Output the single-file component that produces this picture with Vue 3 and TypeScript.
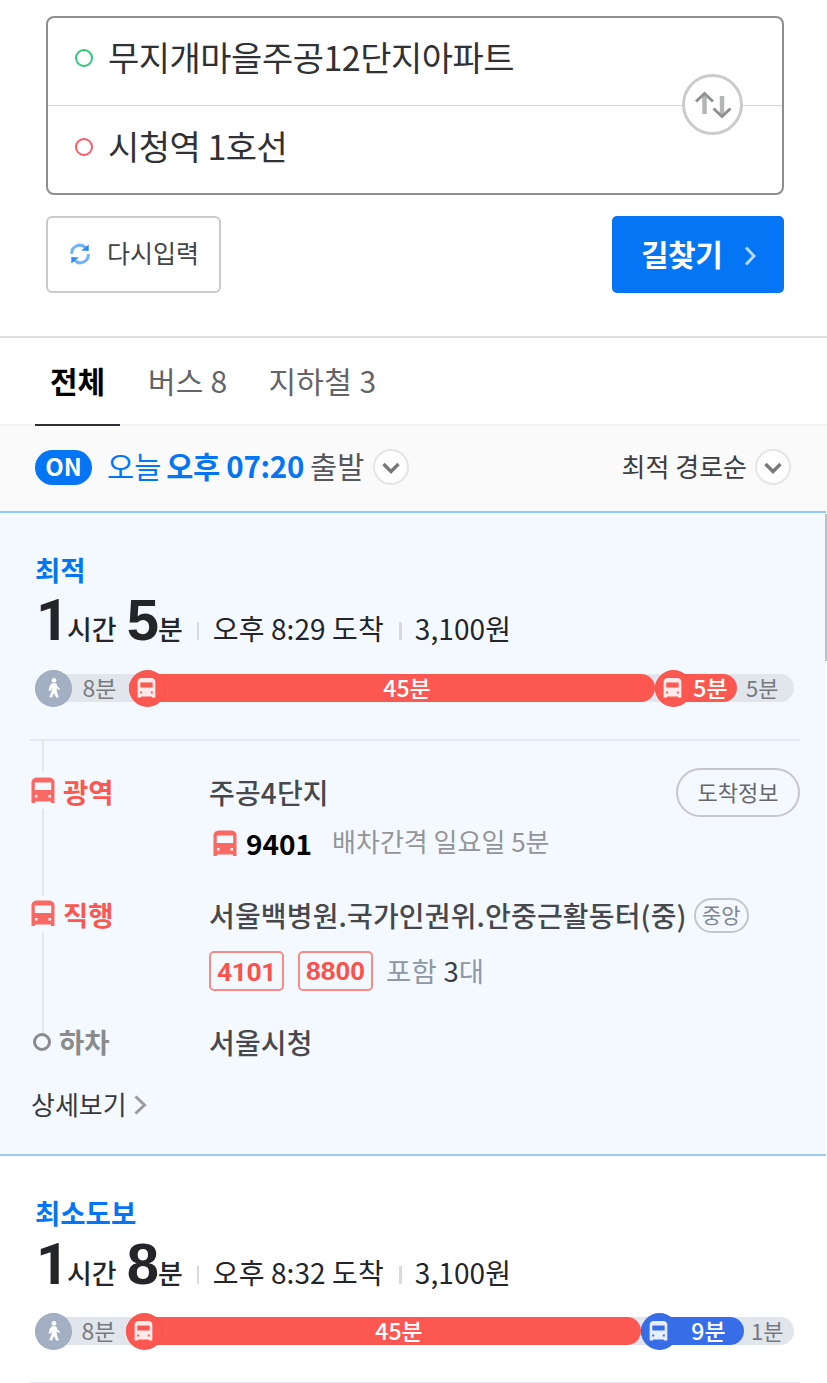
<script setup lang="ts">
interface Segment {
  kind: 'walk' | 'ride'
  color: string
  width: number
  label: string
  labelPad: number
}
interface Route {
  title: string
  minutes: string
  arrival: string
  fare: string
  segments: Segment[]
}

const RED = '#fc5751'
const BLUE = '#386de8'
const GREY = '#e1e6ed'

const routes: Route[] = [
  {
    title: '최적',
    minutes: '5',
    arrival: '오후 8:29 도착',
    fare: '3,100원',
    segments: [
      { kind: 'walk', color: GREY, width: 94, label: '8분', labelPad: 35 },
      { kind: 'ride', color: RED, width: 526, label: '45분', labelPad: 30 },
      { kind: 'ride', color: RED, width: 82, label: '5분', labelPad: 29 },
    ],
  },
  {
    title: '최소도보',
    minutes: '8',
    arrival: '오후 8:32 도착',
    fare: '3,100원',
    segments: [
      { kind: 'walk', color: GREY, width: 91, label: '8분', labelPad: 36 },
      { kind: 'ride', color: RED, width: 515, label: '45분', labelPad: 31 },
      { kind: 'ride', color: BLUE, width: 103, label: '9분', labelPad: 32 },
    ],
  },
]
const lastWalk = ['5분', '1분']
</script>

<template>
  <main class="page">
    <section class="search">
      <div class="fields">
        <div class="field"><i class="dot green"></i><span>무지개마을주공12단지아파트</span></div>
        <div class="field second"><i class="dot red"></i><span>시청역 1호선</span></div>
        <button class="swap">
          <svg width="60" height="60" viewBox="0 0 60 60" fill="none" stroke="#a9aaac" stroke-width="4">
            <path d="M21.500 39V19" stroke="#b4b5b6" stroke-width="4.500" /><path d="M13 26.500l8.500-8 8.500 8" stroke="#8f9092" stroke-width="3" />
            <path d="M39 21v20" stroke="#b4b5b6" stroke-width="4.500" /><path d="M30.500 33.500l8.500 8 8.500-8" stroke="#8f9092" stroke-width="3" />
          </svg>
        </button>
      </div>
      <div class="actions">
        <button class="reset">
          <svg width="20" height="22" viewBox="0 0 20 22" fill="none" stroke="#6fb1fb" stroke-width="3">
            <path d="M1.800 11A8 8 0 0 1 15.500 4.700M18.200 11A8 8 0 0 1 4.500 17.300" />
            <path d="M18.700 1.500v6.500l-7.500-.5zM1.300 20.500V14l7.500.5z" fill="#2f8bf6" stroke="none" />
          </svg>
          <span>다시입력</span>
        </button>
        <button class="find">
          <span>길찾기</span>
          <svg width="12" height="20" viewBox="0 0 12 20" fill="none" stroke="#b4d6ff" stroke-width="3"><path d="M2 1.500l8 8.500-8 8.500" /></svg>
        </button>
      </div>
    </section>

    <nav class="tabs">
      <a class="tab active">전체</a>
      <a class="tab bus-tab">버스 8</a>
      <a class="tab subway-tab">지하철 3</a>
    </nav>

    <section class="filter">
      <span class="on">ON</span>
      <span class="today">오늘</span>
      <span class="time">오후 07:20</span>
      <span class="depart">출발</span>
      <span class="round"><svg width="18" height="12" viewBox="0 0 18 12" fill="none" stroke="#77787a" stroke-width="3.400"><path d="M1.500 2L9 9.500 16.500 2" /></svg></span>
      <span class="sort">최적 경로순</span>
      <span class="round"><svg width="18" height="12" viewBox="0 0 18 12" fill="none" stroke="#77787a" stroke-width="3.400"><path d="M1.500 2L9 9.500 16.500 2" /></svg></span>
    </section>

    <article v-for="(route, i) in routes" :key="route.title" class="card" :class="{ selected: i === 0, plain: i === 1 }">
      <h2 class="title">{{ route.title }}</h2>
      <div class="summary">
        <b class="num one">1</b><span class="unit">시간</span>
        <b class="num">{{ route.minutes }}</b><span class="unit min">분</span>
        <i class="bar-sep"></i><span class="info">{{ route.arrival }}</span>
        <i class="bar-sep second-sep"></i><span class="info">{{ route.fare }}</span>
      </div>
      <div class="track">
        <div v-for="(seg, k) in route.segments" :key="k" class="seg" :class="seg.kind" :style="{ width: seg.width + 'px', '--c': seg.color, '--pad': seg.labelPad + 'px' }">
          <span class="badge">
            <svg v-if="seg.kind === 'walk'" width="14" height="22" viewBox="0 0 16 24" fill="#fff">
              <circle cx="8" cy="3.200" r="2.700" />
              <path d="M5.500 6.500h5l1.500 4 2.800 2-1 1.700-3-1.500.7 4.300 2 5.200-2.800 1-2.700-5.500-2.500 5.500-2.800-1.100 2.500-5.900.1-4.500-1.400 3.500-2.200-.4 1.600-5.600z" />
            </svg>
            <svg v-else width="19" height="20" viewBox="0 0 24 26" fill="#fff" opacity=".88">
              <path fill-rule="evenodd" d="M5 0h14q4.500 1 4.500 5v20.500H19V24H5v1.500H.5V5Q.5 1 5 0zM4 6v6.500h16V6zM3.800 17.500v2.500h2.500v-2.500zM17.700 17.500v2.500h2.500v-2.500z" />
            </svg>
          </span>
          <span class="seg-label">{{ seg.label }}</span>
        </div>
        <span class="last">{{ lastWalk[i] }}</span>
      </div>

      <div class="steps">
        <template v-if="i === 0">
          <div class="rail"><i class="l1"></i><i class="l2"></i><i class="l3"></i></div>
          <div class="step s1">
            <svg class="bus" width="24" height="27" viewBox="0 0 24 26" fill="#fa6863"><path fill-rule="evenodd" d="M5 0h14q4.500 1 4.500 4.500v21H20V24H4v1.500H.5v-21Q.5 1 5 0zM3.800 5v7.500h16.400V5zM4 17.500v2.500h2.500v-2.500zM17.500 17.500v2.500H20v-2.500z" /></svg>
            <b class="type">광역</b><span class="stop">주공4단지</span>
            <button class="arrive">도착정보</button>
          </div>
          <div class="line-info l9401">
            <svg width="24" height="27" viewBox="0 0 24 26" fill="#fa6863"><path fill-rule="evenodd" d="M5 0h14q4.500 1 4.500 4.500v21H20V24H4v1.500H.5v-21Q.5 1 5 0zM3.800 5v7.500h16.400V5zM4 17.500v2.500h2.500v-2.500zM17.500 17.500v2.500H20v-2.500z" /></svg>
            <b class="bus-no">9401</b><span class="interval">배차간격 일요일 5분</span>
          </div>
          <div class="step s2">
            <svg class="bus" width="24" height="27" viewBox="0 0 24 26" fill="#fa6863"><path fill-rule="evenodd" d="M5 0h14q4.500 1 4.500 4.500v21H20V24H4v1.500H.5v-21Q.5 1 5 0zM3.800 5v7.500h16.400V5zM4 17.500v2.500h2.500v-2.500zM17.500 17.500v2.500H20v-2.500z" /></svg>
            <b class="type">직행</b><span class="stop">서울백병원.국가인권위.안중근활동터(중)</span>
            <span class="central">중앙</span>
          </div>
          <div class="line-info chips">
            <b class="chip narrow">4101</b><b class="chip">8800</b><span class="incl">포함 <em>3</em>대</span>
          </div>
          <div class="step s3">
            <i class="end"></i><b class="type off">하차</b><span class="stop">서울시청</span>
          </div>
          <a class="more"><span>상세보기</span><svg width="13" height="20" viewBox="0 0 13 20" fill="none" stroke="#9a9b9d" stroke-width="3"><path d="M1.500 1.500L10.500 10l-9 8.500" /></svg></a>
        </template>
      </div>
      <i v-if="i === 0" class="thumb"></i>
    </article>
  </main>
</template>

<style>
body { background: #fff; }
</style>

<style scoped>
* { box-sizing: border-box; }
.page { width: 827px; height: 1383px; overflow: hidden; background: #fff; color: #2b2c2f; font-family: "Noto Sans CJK KR", "Noto Sans", sans-serif; font-size: 28px; white-space: nowrap; }
button { font-family: inherit; margin: 0; padding: 0; background: #fff; display: flex; align-items: center; }
i, em { font-style: normal; }
svg { flex: none; display: block; }

.search { height: 338px; padding: 16px 43px 0 46px; border-bottom: 2px solid #dedede; }
.fields { position: relative; height: 179px; border: 2px solid #8d8e90; border-radius: 8px; }
.field { display: flex; align-items: center; height: 87px; padding-left: 27px; font-size: 34px; letter-spacing: -.5px; line-height: 50px; padding-bottom: 9px; color: #303134; }
.field.second { height: 88px; border-top: 1px solid #d6d6d6; padding-bottom: 8px; }
.dot { width: 18px; height: 18px; border-radius: 50%; border: 2px solid; margin-right: 15px; flex: none; position: relative; top: 1px; }
.green { color: #30c77b; }
.red { color: #fb5a67; }
.swap { position: absolute; right: 39px; top: 56px; width: 61px; height: 61px; border: 3px solid #cbcbcb; border-radius: 50%; justify-content: center; }
.actions { display: flex; justify-content: space-between; margin-top: 21px; }
.reset { width: 175px; height: 77px; border: 2px solid #cacaca; border-radius: 6px; padding: 0 0 5px 22px; gap: 17px; font-size: 25px; color: #424346; }
.reset svg { position: relative; top: 2px; }
.find { width: 172px; height: 77px; border: 0; border-radius: 5px; background: #0475f4; color: #fff; font-size: 30px; font-weight: 700; padding: 0 0 4px 29px; gap: 22px; letter-spacing: -.5px; }
.find svg { position: relative; top: 3px; }

.tabs { display: flex; height: 88px; padding-left: 35px; border-bottom: 2px solid #f2f2f2; font-size: 30px; line-height: 84px; color: #636467; }
.tab.active { width: 85px; text-align: center; height: 88px; border-bottom: 2px solid #303134; font-weight: 700; color: #000; }
.bus-tab { margin-left: 28px; letter-spacing: .2px; }
.subway-tab { margin-left: 41px; letter-spacing: .4px; }

.filter { display: flex; align-items: center; height: 85px; padding: 0 36px 3px 35px; background: #fafafa; }
.on { width: 57px; height: 35px; border-radius: 18px; background: #0475f4; color: #fff; font-size: 24px; font-weight: 700; line-height: 31px; text-align: center; }
.filter .today, .filter .time, .filter .depart, .filter .sort { position: relative; top: -2px; }
.today { margin-left: 15px; font-size: 29.500px; color: #0475f4; }
.time { margin-left: 5px; font-size: 29.500px; font-weight: 700; color: #0475f4; letter-spacing: -.3px; }
.depart { margin-left: 6px; font-size: 29.500px; color: #56575a; }
.round { width: 36px; height: 36px; margin-left: 9px; border: 2px solid #e5e5e5; border-radius: 50%; background: #fff; display: flex; align-items: center; justify-content: center; }
.round svg { position: relative; top: 1px; }
.sort { margin-left: auto; font-size: 26px; color: #3c3d40; }
.sort + .round { margin-left: 8px; }

.card { position: relative; padding-top: 36px; }
.card.selected { height: 645px; margin-right: 1px; background: #f4f9ff; border-top: 2px solid #92c7fb; border-bottom: 2px solid #9accfb; }
.title { margin: 0 0 0 35px; font-size: 27.500px; line-height: 40px; font-weight: 700; color: #0475f4; }
.summary { height: 60px; margin-top: 3px; padding-left: 36px; display: flex; align-items: baseline; line-height: 56px; color: #242528; }
.plain .summary { margin-top: 4px; height: 59px; }
.num { font: 700 58px/56px "Liberation Sans", Arial, sans-serif; margin-left: 10px; }
.num.one { margin-left: 0; width: 31px; font-family: Roboto, "Liberation Sans", sans-serif; }
.unit { font-size: 27px; font-weight: 500; }
.min { margin-left: -1px; }
.bar-sep { width: 2px; height: 18px; background: #d8dade; margin: 0 14px 0 14px; }
.second-sep { width: 3px; margin-left: 15px; margin-right: 13px; }
.info { font-size: 28px; letter-spacing: .1px; }
.track { display: flex; align-items: center; margin: 22px 32px 0 35px; height: 28px; border-radius: 14px; background: #e1e6ed; font-size: 23px; line-height: 28px; color: #77797d; }
.plain .track { margin-right: 33px; }
.seg { display: flex; align-items: center; position: relative; height: 28px; }
.seg.ride { background: var(--c); border-radius: 14px; color: #fff; font-weight: 500; }
.badge { position: absolute; left: 0; width: 37px; height: 37px; border-radius: 50%; background: var(--c); border: 1px solid rgba(0, 0, 0, .03); display: flex; align-items: center; justify-content: center; }
.ride .badge svg { margin-right: 2px; }
.walk .badge { background: #a3b0c4; }
.seg-label { flex: 1; text-align: center; padding-left: var(--pad); position: relative; top: -1px; }
.last { margin-left: 9px; font-size: 22px; position: relative; top: -1px; }
.plain .last { margin-left: 7px; }
.steps { position: relative; margin: 37px 26px 0 30px; border-top: 2px solid #e3e8f2; }
.plain .steps { margin-right: 27px; }
.rail { position: absolute; left: 12px; top: 0; width: 2px; }
.rail i { position: absolute; left: 0; width: 2px; background: #e1e6ef; }
.l1 { top: 0; height: 31px; }
.l2 { top: 68px; height: 87px; }
.l3 { top: 191px; height: 102px; }
.step { display: flex; align-items: center; height: 49px; margin-top: 27px; }
.bus { margin-left: 1px; position: relative; top: -2px; }
.type { margin-left: 8px; width: 146px; font-size: 27.500px; color: #fc5751; position: relative; top: -2px; }
.stop { font-size: 28px; font-weight: 500; color: #47484b; letter-spacing: .15px; position: relative; top: -1px; }
.arrive { margin-left: auto; width: 124px; height: 49px; border: 2px solid #c6c7c9; border-radius: 25px; background: transparent; justify-content: center; font-size: 22px; color: #67686b; padding-bottom: 3px; }
.line-info { display: flex; align-items: center; height: 42px; margin-left: 183px; }
.l9401 { margin-top: 5px; }
.bus-no { margin-left: 9px; font-size: 28px; color: #000; }
.interval { margin-left: 20px; font-size: 26px; color: #949598; position: relative; top: -3px; }
.s2 { margin-top: 27px; }
.central { margin-left: 7px; width: 55px; height: 35px; border: 2px solid #c1c6ce; border-radius: 18px; font-size: 21px; line-height: 29px; text-align: center; color: #7c8798; }
.chips { margin: 10px 0 0 179px; }
.chip { width: 75px; height: 40px; margin-right: 14px; border: 2px solid #fb8984; border-radius: 5px; font: 700 26.500px/37px "Liberation Sans", Arial, sans-serif; text-align: center; color: #fc514c; }
.chip.narrow { font-family: Roboto, "Liberation Sans", sans-serif; letter-spacing: -.4px; }
.incl { margin-left: -1px; font-size: 27.500px; color: #8e98a7; position: relative; top: -1px; letter-spacing: .2px; }
.incl em { color: #3d3e41; }
.s3 { margin-top: 26px; }
.end { width: 18px; height: 18px; margin-left: 3px; border: 3px solid #8a8b8d; border-radius: 50%; position: relative; top: -1px; }
.type.off { color: #8a8b8d; width: 150px; }
.more { display: flex; align-items: center; gap: 7px; height: 40px; margin: 17px 0 0 1px; font-size: 26px; color: #37383b; }
.more span { position: relative; top: -1px; }
.more svg { position: relative; top: 1px; }
.thumb { position: absolute; right: -1px; top: 1px; width: 2px; height: 147px; background: #c0c1c4; }
</style>
